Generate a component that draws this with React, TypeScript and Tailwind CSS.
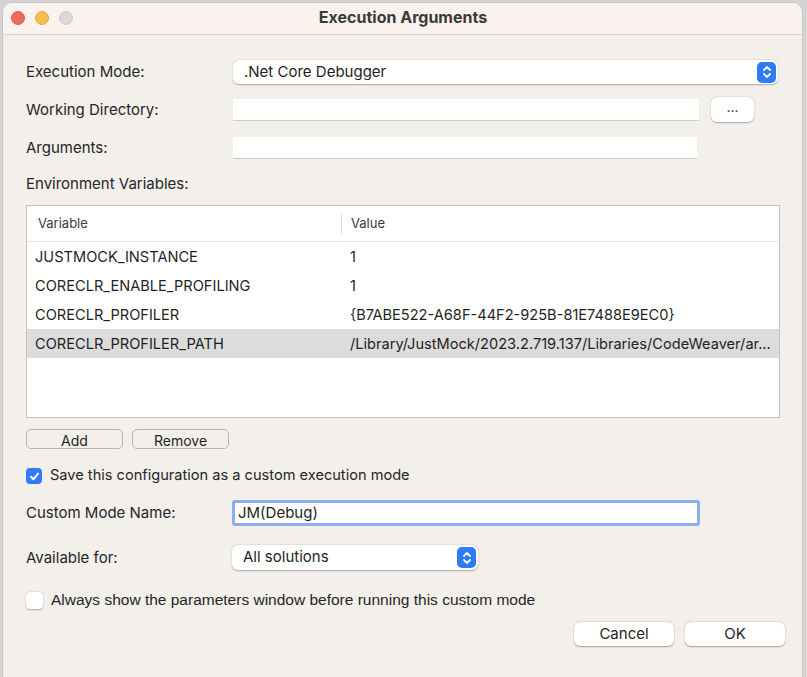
import React from "react";

const rows = [
  { name: "JUSTMOCK_INSTANCE", value: "1" },
  { name: "CORECLR_ENABLE_PROFILING", value: "1" },
  { name: "CORECLR_PROFILER", value: "{B7ABE522-A68F-44F2-925B-81E7488E9EC0}" },
  {
    name: "CORECLR_PROFILER_PATH",
    value: "/Library/JustMock/2023.2.719.137/Libraries/CodeWeaver/ar...",
    selected: true,
  },
];

function Stepper({ h }: { h: string }) {
  return (
    <div className={`flex w-[19px] ${h} items-center justify-center rounded-[5px] bg-[#2f7bf5]`}>
      <svg width="10" height="16" viewBox="0 0 10 16" fill="none" stroke="white" strokeWidth="1.8" strokeLinecap="round" strokeLinejoin="round">
        <path d="M2 6 L5 3 L8 6" />
        <path d="M2 10 L5 13 L8 10" />
      </svg>
    </div>
  );
}

function Label({ children }: { children: React.ReactNode }) {
  return <div className="w-[207px] shrink-0 pt-[1px] text-[15px] text-[#262626]">{children}</div>;
}

export default function App() {
  return (
    <div className="h-[677px] w-[807px] overflow-hidden bg-[#d6d4d2] font-['Inter',sans-serif]">
      <div className="ml-[2px] mt-[2px] h-[700px] w-[801px] overflow-hidden rounded-t-[10px] border border-[#c9c5c2] bg-[#f3efeb]">
        {/* title bar */}
        <div className="relative flex h-[32px] items-center justify-center border-b border-[#d9d4d0] bg-[#f9f2ef] pb-[3px]">
          <div className="absolute left-[8px] top-[8px] flex gap-[10px]">
            <span className="h-[14px] w-[14px] rounded-full border border-[#de5a53] bg-[#ee6a5f]" />
            <span className="h-[14px] w-[14px] rounded-full border border-[#dea73a] bg-[#f5bd4f]" />
            <span className="h-[14px] w-[14px] rounded-full border border-[#cdc9c6] bg-[#dcd8d5]" />
          </div>
          <span className="pl-[1px] text-[16px] font-bold text-[#3a3a3a]">Execution Arguments</span>
        </div>

        <div className="pl-[23px] pr-[22px]">
          {/* execution mode */}
          <div className="mt-[25px] flex h-[24px] items-center">
            <Label>Execution Mode:</Label>
            <div className="flex h-[24px] w-[545px] items-center justify-between rounded-[6px] bg-white pl-[11px] pr-[2px] shadow-[0_0.5px_1.5px_rgba(0,0,0,0.3)]">
              <span className="text-[15px] text-[#1f1f1f]">.Net Core Debugger</span>
              <Stepper h="h-[21px]" />
            </div>
          </div>

          {/* working directory */}
          <div className="mt-[13px] flex h-[25px] items-center">
            <Label>Working Directory:</Label>
            <div className="h-[22px] w-[466px] border-b border-[#cfcbc8] bg-white" />
            <button className="ml-[12px] flex h-[25px] w-[43px] items-center justify-center rounded-[6px] bg-white pb-[6px] text-[14px] text-[#1f1f1f] shadow-[0_0.5px_1.5px_rgba(0,0,0,0.3)]">
              ...
            </button>
          </div>

          {/* arguments */}
          <div className="mt-[15px] flex h-[22px] items-center">
            <Label>Arguments:</Label>
            <div className="h-[22px] w-[464px] border-b border-[#cfcbc8] bg-white" />
          </div>

          <div className="mt-[15px] flex h-[20px] items-center">
            <Label>Environment Variables:</Label>
          </div>

          {/* table */}
          <div className="mt-[11px] h-[213px] w-[754px] border border-[#c4c0bd] bg-white">
            <div className="flex h-[36px] items-center border-b border-[#e6e4e2] text-[13px] text-[#3a3a3a]">
              <div className="w-[314px] pl-[11px]">Variable</div>
              <div className="h-[20px] w-px bg-[#dedbd8]" />
              <div className="pl-[9px]">Value</div>
            </div>
            {rows.map((r) => (
              <div
                key={r.name}
                className={`flex h-[29px] items-center pt-[2px] text-[14.6px] text-[#1f1f1f] ${r.selected ? "bg-[#dcdcdc]" : ""}`}
              >
                <div className="w-[315px] pl-[8px]">{r.name}</div>
                <div className="whitespace-nowrap pl-[8px]">{r.value}</div>
              </div>
            ))}
          </div>

          {/* add / remove */}
          <div className="mt-[11px] flex h-[20px] gap-[9px]">
            <button className="h-[20px] w-[97px] rounded-[5px] border border-[#b9b5b2] bg-[#f3efeb] text-[14px] text-[#1f1f1f]">Add</button>
            <button className="h-[20px] w-[97px] rounded-[5px] border border-[#b9b5b2] bg-[#f3efeb] text-[14px] text-[#1f1f1f]">Remove</button>
          </div>

          {/* checkbox */}
          <div className="mt-[17px] flex h-[20px] items-center gap-[8px]">
            <div className="flex h-[16px] w-[16px] items-center justify-center rounded-[4px] bg-[#2f7bf5]">
              <svg width="11" height="11" viewBox="0 0 11 11" fill="none" stroke="white" strokeWidth="2" strokeLinecap="round" strokeLinejoin="round">
                <path d="M2 5.8 L4.4 8.3 L9 2.6" />
              </svg>
            </div>
            <span className="text-[14.6px] text-[#262626]">Save this configuration as a custom execution mode</span>
          </div>

          {/* custom name */}
          <div className="mt-[14px] flex h-[26px] items-center">
            <div className="w-[206px] shrink-0 pt-[1px] text-[15px] text-[#262626]">Custom Mode Name:</div>
            <div className="flex h-[26px] w-[468px] items-center rounded-[3px] border-[3px] border-[#8eaeef] bg-white pl-[3px]">
              <span className="text-[15px] text-[#1f1f1f]">JM(Debug)</span>
            </div>
          </div>

          {/* available for */}
          <div className="mt-[19px] flex h-[25px] items-center">
            <div className="w-[206px] shrink-0 pt-[1px] text-[15px] text-[#262626]">Available for:</div>
            <div className="flex h-[25px] w-[246px] items-center justify-between rounded-[6px] bg-white pl-[11px] pr-[2px] shadow-[0_0.5px_1.5px_rgba(0,0,0,0.3)]">
              <span className="text-[15px] text-[#1f1f1f]">All solutions</span>
              <Stepper h="h-[21px]" />
            </div>
          </div>

          {/* always show */}
          <div className="mt-[21px] flex h-[18px] items-center gap-[8px]">
            <div className="h-[17px] w-[17px] rounded-[4px] bg-white shadow-[0_0.5px_1.5px_rgba(0,0,0,0.3)]" />
            <span className="font-['Liberation_Sans',sans-serif] text-[15.5px] text-[#262626]">
              Always show the parameters window before running this custom mode
            </span>
          </div>

          {/* footer */}
          <div className="mt-[13px] flex h-[24px] justify-end gap-[11px]">
            <button className="h-[24px] w-[100px] rounded-[6px] bg-white text-[15px] text-[#1f1f1f] shadow-[0_0.5px_1.5px_rgba(0,0,0,0.35)]">Cancel</button>
            <button className="mr-[-5px] h-[24px] w-[100px] rounded-[6px] bg-white text-[15px] text-[#1f1f1f] shadow-[0_0.5px_1.5px_rgba(0,0,0,0.35)]">OK</button>
          </div>
        </div>
      </div>
    </div>
  );
}
